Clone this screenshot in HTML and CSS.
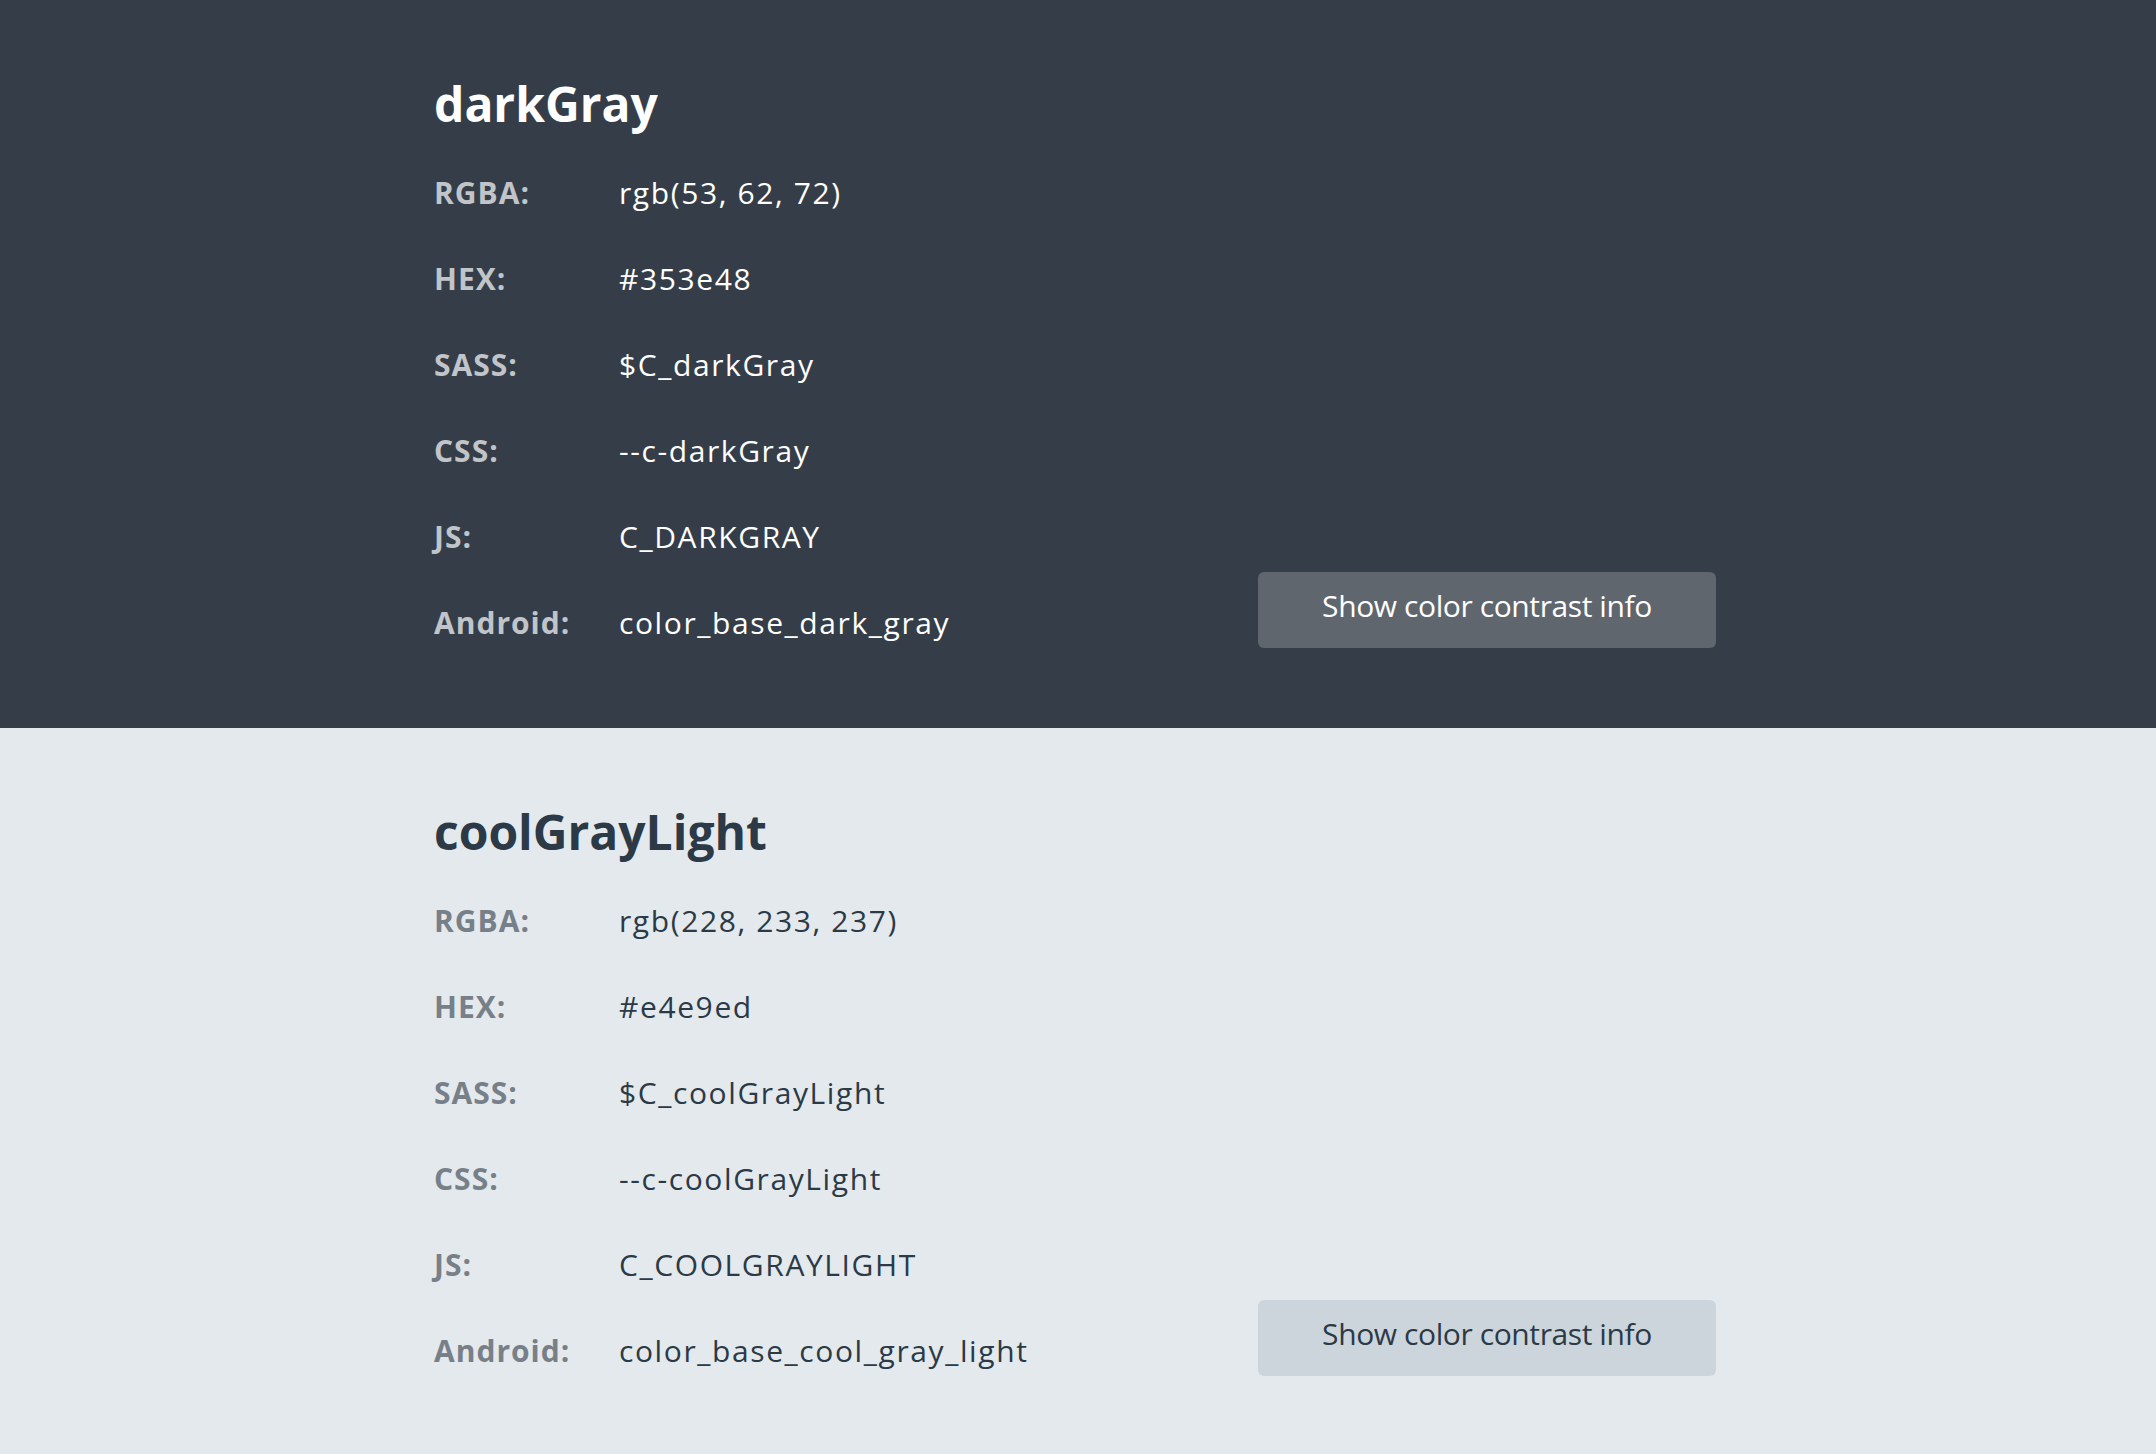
FILE: index.html
```html
<!DOCTYPE html>
<html lang="en">
<head>
<meta charset="utf-8">
<title>Colors</title>
<link rel="stylesheet" href="styles.css">
</head>
<body>
<section class="swatch swatch--dark">
  <div class="swatch__inner">
    <div class="swatch__info">
      <h2 class="swatch__title">darkGray</h2>
      <dl class="swatch__list">
        <div class="swatch__row"><dt>RGBA:</dt><dd>rgb(53, 62, 72)</dd></div>
        <div class="swatch__row"><dt>HEX:</dt><dd>#353e48</dd></div>
        <div class="swatch__row"><dt>SASS:</dt><dd>$C_darkGray</dd></div>
        <div class="swatch__row"><dt>CSS:</dt><dd>--c-darkGray</dd></div>
        <div class="swatch__row"><dt>JS:</dt><dd>C_DARKGRAY</dd></div>
        <div class="swatch__row"><dt>Android:</dt><dd>color_base_dark_gray</dd></div>
      </dl>
    </div>
    <button class="swatch__button" type="button">Show color contrast info</button>
  </div>
</section>
<section class="swatch swatch--light">
  <div class="swatch__inner">
    <div class="swatch__info">
      <h2 class="swatch__title">coolGrayLight</h2>
      <dl class="swatch__list">
        <div class="swatch__row"><dt>RGBA:</dt><dd>rgb(228, 233, 237)</dd></div>
        <div class="swatch__row"><dt>HEX:</dt><dd>#e4e9ed</dd></div>
        <div class="swatch__row"><dt>SASS:</dt><dd>$C_coolGrayLight</dd></div>
        <div class="swatch__row"><dt>CSS:</dt><dd>--c-coolGrayLight</dd></div>
        <div class="swatch__row"><dt>JS:</dt><dd>C_COOLGRAYLIGHT</dd></div>
        <div class="swatch__row"><dt>Android:</dt><dd>color_base_cool_gray_light</dd></div>
      </dl>
    </div>
    <button class="swatch__button" type="button">Show color contrast info</button>
  </div>
</section>
</body>
</html>
```
FILE: styles.css
```css
* {
  box-sizing: border-box;
}

html, body {
  margin: 0;
  padding: 0;
}

body {
  font-family: "Open Sans", "Liberation Sans", sans-serif;
  background: #e4e9ed;
}

.swatch {
  padding: 74px 0 62px;
}

.swatch--dark {
  background: #353e48;
  color: #ffffff;
}

.swatch--light {
  background: #e4e9ed;
  color: #2b3a46;
}

.swatch__inner {
  width: 1288px;
  margin: 0 auto;
  padding-right: 6px;
  display: flex;
  justify-content: space-between;
}

.swatch__title {
  margin: 0 0 16px;
  font-size: 48px;
  line-height: 60px;
  font-weight: 700;
  letter-spacing: 0;
}

.swatch__list {
  margin: 0;
}

.swatch__row {
  display: flex;
  height: 86px;
  line-height: 86px;
  font-size: 30px;
}

.swatch__row dt {
  width: 185px;
  font-weight: 700;
  letter-spacing: 1px;
}

.swatch__row dd {
  margin: 0;
  letter-spacing: 1.6px;
}

.swatch--dark dt {
  color: #c1c4c8;
}

.swatch--light dt {
  color: #778088;
}

.swatch__button {
  align-self: flex-end;
  margin-bottom: 18px;
  width: 458px;
  height: 76px;
  padding: 0 0 8px;
  border: 0;
  border-radius: 6px;
  font-family: inherit;
  font-size: 30px;
  line-height: 68px;
  letter-spacing: -0.4px;
  cursor: pointer;
}

.swatch--dark .swatch__button {
  background: #5f666e;
  color: #ffffff;
}

.swatch--light .swatch__button {
  background: #cdd5dc;
  color: #2b3a46;
}
```
